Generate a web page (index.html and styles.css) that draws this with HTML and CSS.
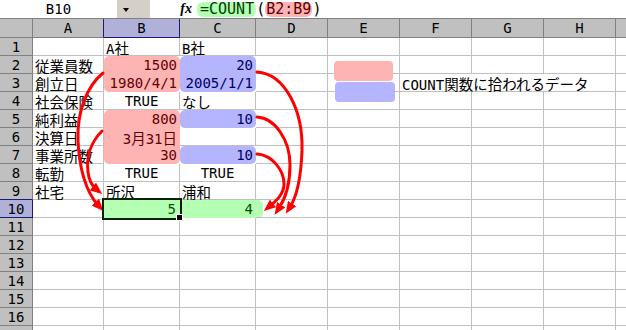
FILE: index.html
```html
<!DOCTYPE html>
<html lang="ja">
<head>
    <meta charset="UTF-8">
    <title>COUNT関数</title>
    <link rel="stylesheet" href="styles.css">
</head>
<body>
<div class="screen">
    <div class="toolbar">
        <div class="namebox">B10</div>
        <div class="dropdown"><span class="tri"></span></div>
        <div class="fx">fx</div>
        <div class="formula"><span class="f-green">=COUNT</span>(<span class="f-pink">B2:B9</span>)</div>
    </div>

    <div class="sheet">
        <!-- header -->
        <div class="hd"></div>
        <div class="hd en sel-left">A</div>
        <div class="hd en sel">B</div>
        <div class="hd en">C</div>
        <div class="hd en">D</div>
        <div class="hd en">E</div>
        <div class="hd en">F</div>
        <div class="hd en">G</div>
        <div class="hd en">H</div>
        <div class="hd en"></div>

        <!-- 1 -->
        <div class="hd rh en">1</div>
        <div class="c"></div>
        <div class="c"><span class="en">A</span>社</div>
        <div class="c"><span class="en">B</span>社</div>
        <div class="c"></div><div class="c"></div><div class="c"></div><div class="c"></div><div class="c"></div><div class="c"></div>

        <!-- 2 -->
        <div class="hd rh en">2</div>
        <div class="c">従業員数</div>
        <div class="c r en pk top">1500</div>
        <div class="c r en bl top">20</div>
        <div class="c"></div><div class="c"></div><div class="c"></div><div class="c"></div><div class="c"></div><div class="c"></div>

        <!-- 3 -->
        <div class="hd rh en">3</div>
        <div class="c">創立日</div>
        <div class="c r en pk bot">1980/4/1</div>
        <div class="c r en bl bot">2005/1/1</div>
        <div class="c"></div><div class="c"></div>
        <div class="c span3"><span class="en">COUNT</span>関数に拾われるデータ</div>
        <div class="c"></div>

        <!-- 4 -->
        <div class="hd rh en">4</div>
        <div class="c">社会保険</div>
        <div class="c ctr en">TRUE</div>
        <div class="c">なし</div>
        <div class="c"></div><div class="c"></div><div class="c"></div><div class="c"></div><div class="c"></div><div class="c"></div>

        <!-- 5 -->
        <div class="hd rh en">5</div>
        <div class="c">純利益</div>
        <div class="c r en pk top">800</div>
        <div class="c r en bl one">10</div>
        <div class="c"></div><div class="c"></div><div class="c"></div><div class="c"></div><div class="c"></div><div class="c"></div>

        <!-- 6 -->
        <div class="hd rh en">6</div>
        <div class="c">決算日</div>
        <div class="c r pk"><span class="en">3</span>月<span class="en">31</span>日</div>
        <div class="c"></div>
        <div class="c"></div><div class="c"></div><div class="c"></div><div class="c"></div><div class="c"></div><div class="c"></div>

        <!-- 7 -->
        <div class="hd rh en">7</div>
        <div class="c">事業所数</div>
        <div class="c r en pk bot">30</div>
        <div class="c r en bl one">10</div>
        <div class="c"></div><div class="c"></div><div class="c"></div><div class="c"></div><div class="c"></div><div class="c"></div>

        <!-- 8 -->
        <div class="hd rh en">8</div>
        <div class="c">転勤</div>
        <div class="c ctr en">TRUE</div>
        <div class="c ctr en">TRUE</div>
        <div class="c"></div><div class="c"></div><div class="c"></div><div class="c"></div><div class="c"></div><div class="c"></div>

        <!-- 9 -->
        <div class="hd rh en sel-up">9</div>
        <div class="c">社宅</div>
        <div class="c">所沢</div>
        <div class="c">浦和</div>
        <div class="c"></div><div class="c"></div><div class="c"></div><div class="c"></div><div class="c"></div><div class="c"></div>

        <!-- 10 -->
        <div class="hd rh en sel">10</div>
        <div class="c"></div>
        <div class="c r en gr cur">5</div>
        <div class="c r en gr one wide">4</div>
        <div class="c"></div><div class="c"></div><div class="c"></div><div class="c"></div><div class="c"></div><div class="c"></div>

        <!-- 11 - 17 -->
        <div class="hd rh en">11</div>
        <div class="c"></div><div class="c"></div><div class="c"></div><div class="c"></div><div class="c"></div><div class="c"></div><div class="c"></div><div class="c"></div><div class="c"></div>
        <div class="hd rh en">12</div>
        <div class="c"></div><div class="c"></div><div class="c"></div><div class="c"></div><div class="c"></div><div class="c"></div><div class="c"></div><div class="c"></div><div class="c"></div>
        <div class="hd rh en">13</div>
        <div class="c"></div><div class="c"></div><div class="c"></div><div class="c"></div><div class="c"></div><div class="c"></div><div class="c"></div><div class="c"></div><div class="c"></div>
        <div class="hd rh en">14</div>
        <div class="c"></div><div class="c"></div><div class="c"></div><div class="c"></div><div class="c"></div><div class="c"></div><div class="c"></div><div class="c"></div><div class="c"></div>
        <div class="hd rh en">15</div>
        <div class="c"></div><div class="c"></div><div class="c"></div><div class="c"></div><div class="c"></div><div class="c"></div><div class="c"></div><div class="c"></div><div class="c"></div>
        <div class="hd rh en">16</div>
        <div class="c"></div><div class="c"></div><div class="c"></div><div class="c"></div><div class="c"></div><div class="c"></div><div class="c"></div><div class="c"></div><div class="c"></div>
        <div class="hd rh"></div>
        <div class="c"></div><div class="c"></div><div class="c"></div><div class="c"></div><div class="c"></div><div class="c"></div><div class="c"></div><div class="c"></div><div class="c"></div>
    </div>

    <!-- legend boxes and arrows drawn over the sheet -->
    <svg class="marks" width="626" height="330" viewBox="0 0 626 330">
        <defs>
            <marker id="head" markerWidth="12" markerHeight="10" refX="4" refY="5" orient="auto" markerUnits="userSpaceOnUse">
                <path d="M0,0 L12,5 L0,10 z" fill="#f00"/>
            </marker>
        </defs>
        <rect x="334" y="61" width="59" height="20" rx="4" fill="#ffb4b4"/>
        <rect x="335" y="82" width="60" height="20" rx="4" fill="#b4b4ff"/>
        <g fill="none" stroke="#f00" stroke-width="3" stroke-linecap="round" marker-end="url(#head)">
            <path d="M103,73 C86,87 77,113 78,140 C79,168 86,192 98,205"/>
            <path d="M102,131 C91,142 86,157 88,172 C89,180 91,185 96,189"/>
            <path d="M257,72 C285,74 303,110 302,150 C301,180 297,196 290,207"/>
            <path d="M257,117 C275,118 290,140 290,165 C290,186 285,199 279,208"/>
            <path d="M257,154 C272,155 284,170 284,184 C284,194 276,201 270,206"/>
        </g>
    </svg>
</div>
</body>
</html>
```

FILE: styles.css
```css
* {
    box-sizing: border-box;
}
body {
    margin: 0;
    background: #fff;
    color: #000;
    font-family: "Noto Sans CJK JP", sans-serif;
    font-size: 14.5px;
    overflow: hidden;
}
.screen {
    position: relative;
    width: 626px;
    height: 330px;
    overflow: hidden;
}
.en {
    font-family: "DejaVu Sans Mono", monospace;
    font-size: 14px;
}

/* formula bar */
.toolbar {
    display: flex;
    height: 18px;
}
.namebox {
    width: 117px;
    text-align: center;
    font: 14px/18px "DejaVu Sans Mono", monospace;
}
.dropdown {
    width: 33px;
    background: #d4d0c8;
    padding: 8px 0 0 6px;
}
.tri {
    display: block;
    width: 0;
    height: 0;
    border-left: 3px solid transparent;
    border-right: 3px solid transparent;
    border-top: 4px solid #000;
}
.fx {
    width: 47px;
    text-align: right;
    padding-right: 5px;
    font: italic bold 14px/18px "Liberation Serif", serif;
}
.formula {
    display: flex;
    align-items: center;
    white-space: pre;
    font: 15px/15px "DejaVu Sans Mono", monospace;
}
.f-green {
    background: #b4ffb4;
    color: #003c00;
    border-radius: 6px;
    padding: 0 2px 0 3px;
}
.f-pink {
    background: #ffb4b4;
    color: #5a0000;
    border-radius: 6px;
    padding: 0 1px;
}

/* sheet */
.sheet {
    display: grid;
    grid-template-columns: 33px 71px 76px 76px repeat(5, 72px) 20px;
    grid-template-rows: 19px;
    grid-auto-rows: 18px;
    border-top: 1px solid #808080;
}
.c {
    border-right: 1px solid #c0c0c0;
    border-bottom: 1px solid #c0c0c0;
    padding: 1px 2px 0;
    line-height: 17px;
    white-space: nowrap;
}
.hd {
    background: #c0c0c0;
    border-right: 1px solid #808080;
    border-bottom: 1px solid #808080;
    text-align: center;
    line-height: 19px;
}
.rh {
    line-height: 18px;
}
.hd.sel {
    background: #b0b0d8;
    border-color: #1c1c78;
}
.hd.sel-left {
    border-right-color: #1c1c78;
}
.hd.sel-up {
    border-bottom-color: #1c1c78;
}
.r {
    text-align: right;
}
.ctr {
    text-align: center;
}
.span3 {
    grid-column: span 3;
}

/* COUNT対象の塗り */
.pk {
    background: #ffb4b4;
    border-color: #ffb4b4;
    color: #640000;
}
.bl {
    background: #b4b4ff;
    border-color: #b4b4ff;
    color: #000064;
}
.gr {
    background: #b4ffb4;
    border-color: #b4ffb4;
    color: #005000;
}
.top {
    border-radius: 5px 5px 0 0;
}
.bot {
    border-radius: 0 0 5px 5px;
}
.one {
    border-radius: 5px;
}
.wide {
    margin-right: -7px;
    padding-right: 9px;
}
.cur {
    position: relative;
    z-index: 2;
    outline: 2px solid #0c200c;
    padding-right: 3px;
}
.cur::after {
    content: "";
    position: absolute;
    right: -4px;
    bottom: -4px;
    width: 5px;
    height: 5px;
    background: #000;
    border: 1px solid #fff;
}

.marks {
    position: absolute;
    top: 0;
    left: 0;
    pointer-events: none;
}
```
